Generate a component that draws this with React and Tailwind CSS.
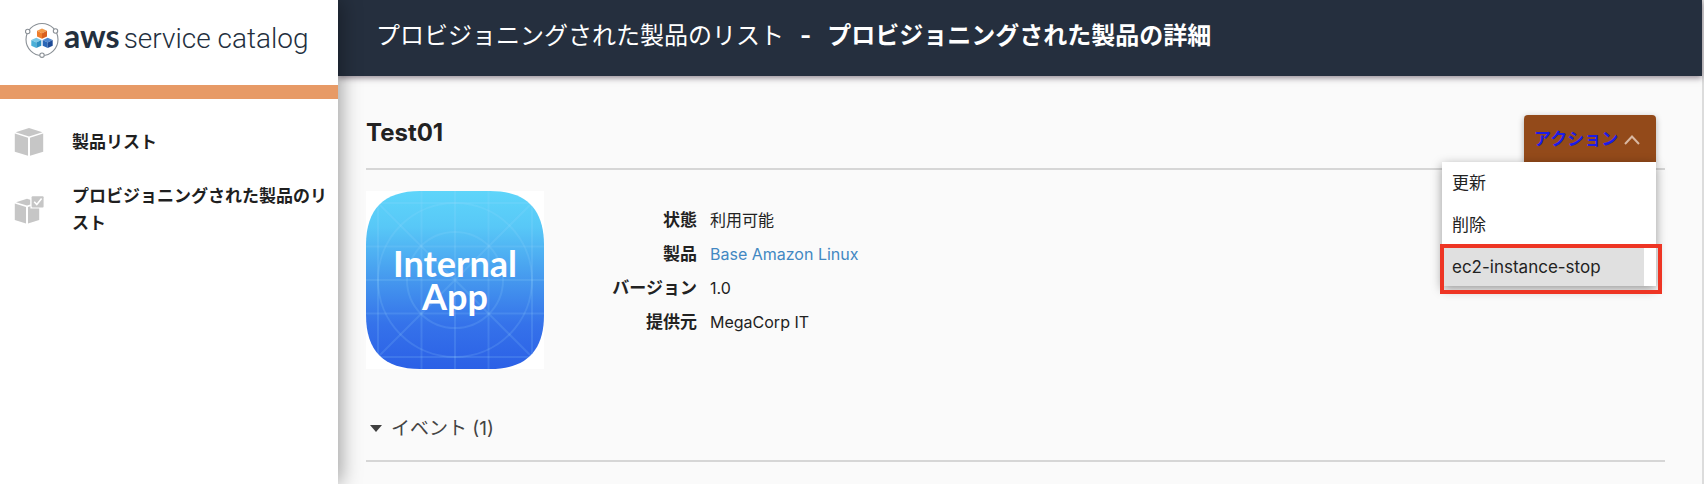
function CatalogLogo() {
  return (
    <svg viewBox="0 0 36 36" className="h-9 w-9 shrink-0" aria-hidden="true">
      <circle cx="18" cy="17.5" r="16" fill="none" stroke="#8a9096" strokeWidth="1.1" />
      <g fill="#fff" stroke="#8a9096" strokeWidth="1.1">
        <circle cx="3.7" cy="9.5" r="2.2" />
        <circle cx="31.5" cy="9" r="2.2" />
        <circle cx="18" cy="33.2" r="2.2" />
      </g>
      <path d="M18 6.500l5 2.3-5 2.4-5-2.4z" fill="#f29a4a" />
      <path d="M13 8.800l5 2.4v5.600l-5-2.3z" fill="#ef7d2b" />
      <path d="M23 8.800l-5 2.4v5.600l5-2.3z" fill="#d9601f" />
      <path d="M12.300 15.700l5 2.3-5 2.4-5-2.4z" fill="#7cc8e6" />
      <path d="M7.300 18l5 2.4v5.600l-5-2.3z" fill="#4bb0d8" />
      <path d="M17.300 18l-5 2.4v5.600l5-2.3z" fill="#2c8fc2" />
      <path d="M23.700 15.700l5 2.3-5 2.4-5-2.4z" fill="#4d86cf" />
      <path d="M18.700 18l5 2.4v5.600l-5-2.3z" fill="#2a67b7" />
      <path d="M28.700 18l-5 2.4v5.600l5-2.3z" fill="#1d4a96" />
    </svg>
  );
}

function BoxIcon() {
  return (
    <svg viewBox="0 0 30 30" className="h-[30px] w-[30px]" fill="#c6c6c6" aria-hidden="true">
      <path d="M15 1l13.4 4.2L15 9.4 1.6 5.2z" />
      <path d="M.8 6.6L14 10.7v18L.8 24.8z" />
      <path d="M29.2 6.6L16 10.7v18l13.2-3.9z" />
    </svg>
  );
}

function CheckedBoxIcon() {
  return (
    <svg viewBox="0 0 30 30" className="h-[30px] w-[30px]" fill="#c6c6c6" aria-hidden="true">
      <path d="M13 3.8l3.2 1v4.6L13 10.5 2 7.2z" />
      <path d="M.8 8.6L12 12v16.4L.8 25z" />
      <path d="M14 12l2.4-.8v2.3h8.8V25L14 28.4z" />
      <rect x="17.6" y="1.2" width="12" height="11.4" rx="1" />
      <path d="M20.2 6.8l2.6 2.8 4.8-6" fill="none" stroke="#fff" strokeWidth="1.6" />
    </svg>
  );
}

function AppTile() {
  return (
    <svg viewBox="0 0 178 178" className="h-[178px] w-[178px] shrink-0 bg-white" role="img" aria-label="Internal App">
      <defs>
        <linearGradient id="tile" x1="0" y1="0" x2="0" y2="1">
          <stop offset="0" stopColor="#5ed5fa" />
          <stop offset="0.2" stopColor="#58c8f7" />
          <stop offset="0.5" stopColor="#4598ee" />
          <stop offset="0.75" stopColor="#3572ea" />
          <stop offset="1" stopColor="#2b60e6" />
        </linearGradient>
        <clipPath id="tile-shape">
          <path d="M54 0H124C160 0 178 18 178 54V124C178 160 160 178 124 178H54C18 178 0 160 0 124V54C0 18 18 0 54 0Z" />
        </clipPath>
      </defs>
      <g clipPath="url(#tile-shape)">
        <rect width="178" height="178" fill="url(#tile)" />
        <g fill="none" stroke="#9fdcff" strokeOpacity="0.15" strokeWidth="2">
          <path d="M12 0V178M55.500 0V178M89 0V178M122.500 0V178M166 0V178" />
          <path d="M0 12H178M0 55.500H178M0 89H178M0 122.500H178M0 166H178" />
          <path d="M0 0L178 178M178 0L0 178" />
          <circle cx="89" cy="89" r="77" />
          <circle cx="89" cy="89" r="48" />
        </g>
      </g>
      <text fill="#fff" fontFamily="Lato, sans-serif" fontWeight="700" textAnchor="middle" fontSize="36">
        <tspan x="89" y="86">Internal</tspan>
        <tspan x="89" y="119">App</tspan>
      </text>
    </svg>
  );
}

const navItems = [
  { label: "製品リスト", Icon: BoxIcon },
  { label: "プロビジョニングされた製品のリスト", Icon: CheckedBoxIcon },
];

const details = [
  { label: "状態", value: "利用可能" },
  { label: "製品", value: "Base Amazon Linux", href: "#product" },
  { label: "バージョン", value: "1.0" },
  { label: "提供元", value: "MegaCorp IT" },
];

function Sidebar() {
  return (
    <aside className="relative z-10 w-[338px] shrink-0 bg-white shadow-[2px_0_20px_rgba(0,0,0,0.4)]">
      <div className="flex h-[85px] items-start gap-1 pt-[22px] pl-6">
        <CatalogLogo />
        <p className="flex items-baseline gap-1 leading-7 whitespace-nowrap text-[#232f3e]">
          <span className="font-[Lato,sans-serif] text-[32px] font-bold">aws</span>
          <span className="font-[Roboto,sans-serif] text-[28px] font-light">service catalog</span>
        </p>
      </div>
      <div className="h-[14px] bg-[#e79a66]" />
      <nav className="flex flex-col gap-[26px] pt-7 pr-2 pl-[14px] text-[17px] leading-[27px] font-bold text-[#1f1f1f]">
        {navItems.map(({ label, Icon }) => (
          <a key={label} href="#nav" className="flex items-center gap-7">
            <Icon />
            <span className="flex-1 break-all">{label}</span>
          </a>
        ))}
      </nav>
    </aside>
  );
}

function ActionMenu() {
  return (
    <div className="relative mr-[9px]">
      <button
        type="button"
        aria-expanded="true"
        className="flex h-[47px] w-[132px] items-center gap-[6px] rounded-t-sm bg-[#934a1a] pt-[3px] pl-[10px] text-[17px] font-bold text-[#1c1ce8] shadow-[0_2px_6px_rgba(0,0,0,0.3)]"
      >
        アクション
        <svg viewBox="0 0 16 10" className="h-[10px] w-4" fill="none" aria-hidden="true">
          <path d="M1 9l7-7.500L15 9" stroke="#d9b8a2" strokeWidth="2" />
        </svg>
      </button>
      <ul className="absolute top-full right-0 z-20 w-[214px] bg-white text-[17px] leading-[26px] text-[#222] shadow-[0_3px_10px_rgba(0,0,0,0.4)]">
        <li>
          <button type="button" className="block h-[42px] w-full pl-[10px] text-left">更新</button>
        </li>
        <li>
          <button type="button" className="block h-[42px] w-full pl-[10px] text-left">削除</button>
        </li>
        <li className="relative">
          <button type="button" className="block h-10 w-[202px] bg-[#e0e0e0] pt-[2px] pl-[10px] text-left">ec2-instance-stop</button>
          <div className="pointer-events-none absolute -top-[2px] -right-[6px] -bottom-2 -left-[2px] border-4 border-[#ee3524]" />
        </li>
      </ul>
    </div>
  );
}

export default function App() {
  return (
    <div className="flex min-h-screen bg-[#fafafa] font-[Inter,'Noto_Sans_CJK_JP',sans-serif] text-[#222]">
      <Sidebar />
      <div className="min-w-0 flex-1 border-r-2 border-[#dcdcdc]">
        <header className="flex h-[76px] items-start gap-4 bg-[#252f3e] pt-[18px] pl-[38px] text-[24px] leading-9 whitespace-nowrap text-white shadow-[0_2px_6px_rgba(40,20,40,0.5)]">
          <a href="#list">プロビジョニングされた製品のリスト</a>
          <span className="font-bold">-</span>
          <h1 className="font-bold">プロビジョニングされた製品の詳細</h1>
        </header>
        <main className="pr-[37px] pl-7">
          <div className="flex h-[94px] items-start justify-between border-b-2 border-[#d6d6d6] pt-[39px]">
            <h2 className="text-[24px] leading-9 font-bold">Test01</h2>
            <ActionMenu />
          </div>
          <section className="flex gap-6 pt-[21px]">
            <AppTile />
            <dl className="grid grid-cols-[129px_1fr] content-start gap-x-[13px] pt-3 leading-[34px]">
              {details.map(({ label, value, href }) => (
                <div key={label} className="contents">
                  <dt className="text-right text-[17px] font-bold whitespace-nowrap">{label}</dt>
                  <dd className="text-[16px]">{href ? <a href={href} className="text-[#4288c2]">{value}</a> : value}</dd>
                </div>
              ))}
            </dl>
          </section>
          <button
            type="button"
            aria-expanded="true"
            className="mt-[42px] flex h-[51px] w-full items-start gap-[9px] border-b-2 border-[#d6d6d6] pl-1 text-[19px] leading-9 text-[#444]"
          >
            <svg viewBox="0 0 12 7" className="mt-[14px] h-[7px] w-3" aria-hidden="true">
              <path d="M0 0h12L6 7z" fill="#3f3f3f" />
            </svg>
            イベント (1)
          </button>
        </main>
      </div>
    </div>
  );
}
